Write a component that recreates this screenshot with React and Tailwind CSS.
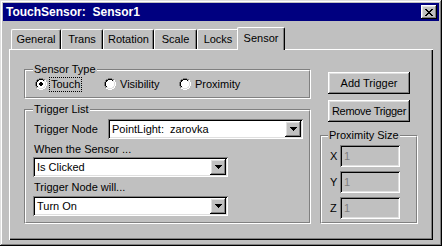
import React from "react";

const raised =
  "shadow-[inset_-1px_-1px_#000,inset_1px_1px_#fff,inset_-2px_-2px_#808080,inset_2px_2px_#dfdfdf]";
const sunken =
  "shadow-[inset_1px_1px_#808080,inset_-1px_-1px_#fff,inset_2px_2px_#000,inset_-2px_-2px_#dfdfdf]";

const RADIO = [
  "....oooo....",
  "..ooiiiioo..",
  ".oiiffffiio.",
  ".oiffffffio.",
  "oiffffffffio",
  "oiffffffffio",
  "oiffffffffio",
  "oiffffffffio",
  ".oiffffffio.",
  ".oiiffffiio.",
  "..ooiiiioo..",
  "....oooo....",
];

const Radio = ({ checked }) => {
  const px = [];
  RADIO.forEach((row, r) => {
    row.split("").forEach((ch, c) => {
      if (ch === ".") return;
      const dark = r + c < 11;
      let fill = "#fff";
      if (ch === "o") fill = dark ? "#808080" : "#fff";
      if (ch === "i") fill = dark ? "#000" : "#dfdfdf";
      if (checked && ch === "f" && r >= 4 && r <= 7 && c >= 4 && c <= 7) {
        const corner = (r === 4 || r === 7) && (c === 4 || c === 7);
        if (!corner) fill = "#000";
      }
      px.push(<rect key={`${r}-${c}`} x={c} y={r} width="1" height="1" fill={fill} />);
    });
  });
  return (
    <svg width="12" height="12" viewBox="0 0 12 12" shapeRendering="crispEdges" className="shrink-0">
      {px}
    </svg>
  );
};

const XGlyph = () => (
  <svg width="8" height="7" viewBox="0 0 8 7" shapeRendering="crispEdges">
    <path d="M0 0h2v1H0zM6 0h2v1H6zM1 1h2v1H1zM5 1h2v1H5zM2 2h4v1H2zM3 3h2v1H3zM2 4h4v1H2zM1 5h2v1H1zM5 5h2v1H5zM0 6h2v1H0zM6 6h2v1H6z" fill="#000" />
  </svg>
);

const Arrow = () => (
  <svg width="7" height="4" viewBox="0 0 7 4" shapeRendering="crispEdges">
    <path d="M0 0h7v1H0zM1 1h5v1H1zM2 2h3v1H2zM3 3h1v1H3z" fill="#000" />
  </svg>
);

const Dropdown = ({ value }) => (
  <div className={`flex h-[20px] w-[195px] items-center bg-white p-[2px] ${sunken}`}>
    <span className="flex-1 whitespace-pre pl-[2px]">{value}</span>
    <div className={`flex h-[16px] w-[16px] items-center justify-center bg-[#c0c0c0] ${raised}`}>
      <Arrow />
    </div>
  </div>
);

// etched group box: grey outer line + white inner line
const Group = ({ title, titleLeft, className, children }) => (
  <div className={`relative border border-b-white border-l-[#808080] border-r-white border-t-[#808080] ${className}`}>
    <div className="h-full border border-b-[#808080] border-l-white border-r-[#808080] border-t-white">
      {children}
    </div>
    <span className={`absolute -top-[7px] bg-[#c0c0c0] px-[1px] ${titleLeft}`}>{title}</span>
  </div>
);

const Tab = ({ label, width }) => (
  <div
    className={`flex h-[20px] items-center justify-center rounded-t-[2px] border-l border-r border-t border-l-white border-r-black border-t-white shadow-[inset_-1px_0_#808080] ${width}`}
  >
    {label}
  </div>
);

const Field = ({ label }) => (
  <div className="flex items-center">
    <span className="w-[18px] pl-[8px]">{label}</span>
    <div className={`flex h-[22px] w-[60px] items-center bg-[#c0c0c0] pl-[4px] text-[#808080] ${sunken}`}>1</div>
  </div>
);

export default function App() {
  return (
    <div className="font-['Liberation_Sans',Arial,sans-serif] text-[11px] leading-[13px] text-black">
      <div className="flex h-[246px] w-[442px] flex-col bg-[#c0c0c0] p-[3px] shadow-[inset_-1px_-1px_#000,inset_1px_1px_#dfdfdf,inset_-2px_-2px_#808080,inset_2px_2px_#fff]">
        {/* title bar */}
        <div className="flex h-[18px] items-center justify-between bg-[#000080] pl-[3px] pr-[2px]">
          <span className="whitespace-pre text-[12px] font-bold text-white">TouchSensor:  Sensor1</span>
          <div className={`flex h-[14px] w-[16px] items-center justify-center bg-[#c0c0c0] ${raised}`}>
            <XGlyph />
          </div>
        </div>

        {/* tabs */}
        <div className="ml-[6px] mt-[6px] flex h-[22px] items-end pl-[2px]">
          <Tab label="General" width="w-[50px]" />
          <Tab label="Trans" width="w-[42px]" />
          <Tab label="Rotation" width="w-[51px]" />
          <Tab label="Scale" width="w-[43px]" />
          <Tab label="Locks" width="w-[42px]" />
          <div className="relative z-10 -mb-[1px] -ml-[2px] flex h-[23px] w-[48px] items-center justify-center rounded-t-[2px] border-l border-r border-t border-l-white border-r-black border-t-white bg-[#c0c0c0] pb-[2px] shadow-[inset_-1px_0_#808080]">
            Sensor
          </div>
        </div>

        {/* tab panel */}
        <div className="ml-[6px] flex h-[191px] w-[424px] pl-[15px] pt-[20px] shadow-[inset_1px_1px_#fff,inset_-1px_-1px_#000,inset_-2px_-2px_#808080]">
          <div className="flex w-[287px] flex-col">
            <Group title="Sensor Type" titleLeft="left-[8px]" className="h-[30px]">
              <div className="flex h-full items-center pl-[9px]">
                <div className="flex w-[69px] items-center">
                  <Radio checked />
                  <span className="ml-[2px] border border-dotted border-black px-[1px]">Touch</span>
                </div>
                <div className="flex w-[75px] items-center">
                  <Radio />
                  <span className="ml-[4px]">Visibility</span>
                </div>
                <div className="flex items-center">
                  <Radio />
                  <span className="ml-[4px]">Proximity</span>
                </div>
              </div>
            </Group>

            <Group title="Trigger List" titleLeft="left-[8px]" className="mt-[10px] h-[115px]">
              <div className="flex flex-col pl-[7px] pt-[8px]">
                <div className="flex items-center">
                  <span className="w-[75px] pl-[1px]">Trigger Node</span>
                  <Dropdown value="PointLight:  zarovka" />
                </div>
                <span className="mt-[4px] pl-[1px]">When the Sensor ...</span>
                <div className="mt-[1px]">
                  <Dropdown value="Is Clicked" />
                </div>
                <span className="mt-[4px] pl-[1px]">Trigger Node will...</span>
                <div className="mt-[2px]">
                  <Dropdown value="Turn On" />
                </div>
              </div>
            </Group>
          </div>

          <div className="ml-[9px] flex w-[98px] flex-col pt-[3px]">
            <div className={`ml-[8px] flex h-[22px] w-[82px] items-center justify-center ${raised}`}>Add Trigger</div>
            <div className={`ml-[8px] mt-[6px] flex h-[22px] w-[82px] items-center justify-center tracking-[-0.3px] ${raised}`}>
              Remove Trigger
            </div>
            <Group title="Proximity Size" titleLeft="left-[7px]" className="mt-[13px] h-[89px]">
              <div className="flex flex-col gap-[4px] pt-[8px]">
                <Field label="X" />
                <Field label="Y" />
                <Field label="Z" />
              </div>
            </Group>
          </div>
        </div>
      </div>
    </div>
  );
}
